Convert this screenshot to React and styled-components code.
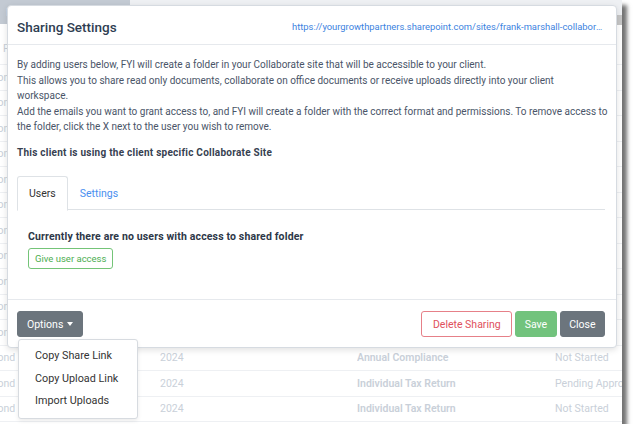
import React from 'react';
import styled, { createGlobalStyle } from 'styled-components';

/********************     GLOBAL     ********************/

const GlobalStyle = createGlobalStyle`
  html, body {
    margin: 0;
    padding: 0;
    background: #fff;
  }
  body {
    font-family: Roboto, "Liberation Sans", sans-serif;
  }
  * {
    box-sizing: border-box;
  }
`;

/********************     PAGE BEHIND THE MODAL     ********************/

const Screen = styled.div`
  position: relative;
  width: 622px;
  height: 424px;
  overflow: hidden;
  background: #fff;
  box-shadow: 5px 5px 4px rgba(0, 0, 0, 0.55);
`;

const PageHeader = styled.div`
  display: flex;
  height: 24px;
  background: #c3cad3;
`;

const Brand = styled.div`
  width: 130px;
  display: flex;
  align-items: center;
  gap: 16px;
  padding: 0 6px;
  color: rgba(255, 255, 255, 0.75);
  font-size: 11px;
`;

const Search = styled.div`
  flex: 1;
  display: flex;
  align-items: center;
  gap: 5px;
  padding-left: 6px;
  background: #eef0f3;
  color: #c4cad2;
  font-size: 11px;
`;

const HeadRow = styled.div`
  height: 41px;
  padding: 18px 0 0 3px;
  border-bottom: 1px solid #eef0f3;
  color: #c9d0d9;
  font-size: 10.5px;
`;

const Row = styled.div`
  display: grid;
  grid-template-columns: 160px 197px 198px 1fr;
  align-items: center;
  height: 25.5px;
  border-bottom: 1px solid #eef0f3;
  color: #c9d0d9;
  font-size: 10.5px;
  white-space: nowrap;
`;

const Cell = styled.span`
  overflow: hidden;
  font-weight: ${(p) => (p.$strong ? 600 : 400)};
`;

const FirstCell = styled.span`
  margin-left: -9px;
`;

const ScrollThumb = styled.div`
  position: absolute;
  right: 0;
  top: 15px;
  width: 5px;
  height: 10px;
  background: #c6c6c6;
`;

/********************     MODAL     ********************/

const Modal = styled.div`
  position: absolute;
  left: 7px;
  top: 5px;
  width: 610px;
  height: 343px;
  display: flex;
  flex-direction: column;
  background: #fff;
  border: 1px solid #d6dbe1;
  border-radius: 4px;
  box-shadow: 0 2px 6px rgba(0, 0, 0, 0.12);
`;

const ModalHeader = styled.div`
  height: 39px;
  display: flex;
  align-items: center;
  justify-content: space-between;
  padding: 3px 11px 0 9px;
  border-bottom: 1px solid #e6e9ed;
`;

const Title = styled.h4`
  margin: 0;
  font-size: 13.5px;
  font-weight: 500;
  color: #2e3d52;
`;

const SiteLink = styled.a`
  max-width: 313px;
  overflow: hidden;
  white-space: nowrap;
  text-overflow: ellipsis;
  font-size: 9.4px;
  color: #3b82e0;
  text-decoration: none;
`;

const ModalBody = styled.div`
  flex: 1;
  padding: 12px 11px 0 9px;
  color: #4a5568;
  font-size: 10px;
  line-height: 15.5px;
`;

const Intro = styled.p`
  margin: 0;
  white-space: nowrap;
`;

const Notice = styled.p`
  margin: 10px 0 0;
  font-weight: 700;
  letter-spacing: 0.25px;
  color: #374151;
`;

const TabNav = styled.div`
  display: flex;
  height: 34px;
  margin-top: 16px;
  border-bottom: 1px solid #dee2e6;
`;

const Tab = styled.div`
  display: flex;
  align-items: center;
  height: 35px;
  margin-bottom: -1px;
  padding: 0 11px;
  font-size: 10.5px;
  color: ${(p) => (p.$active ? '#333' : '#4a8ff0')};
  background: ${(p) => (p.$active ? '#fff' : 'transparent')};
  border: 1px solid ${(p) => (p.$active ? '#dee2e6' : 'transparent')};
  border-bottom-color: ${(p) => (p.$active ? '#fff' : 'transparent')};
  border-radius: 3px 3px 0 0;
`;

const TabPane = styled.div`
  padding: 20px 11px 0;
`;

const EmptyText = styled.div`
  font-size: 10.5px;
  line-height: 14px;
  font-weight: 700;
  letter-spacing: 0.15px;
  color: #2d3748;
`;

const Button = styled.button`
  display: inline-flex;
  align-items: center;
  justify-content: center;
  height: ${(p) => (p.$small ? '21px' : '26px')};
  padding: 0 ${(p) => (p.$small ? '6px' : '8.5px')};
  font-family: inherit;
  font-size: ${(p) => (p.$small ? '9.5px' : '10.5px')};
  border-radius: 3px;
  cursor: pointer;
  color: ${(p) => p.$color || '#fff'};
  background: ${(p) => p.$bg || '#fff'};
  border: 1px solid ${(p) => p.$border || p.$bg || '#fff'};
`;

const GiveButton = styled(Button)`
  margin-top: 4px;
`;

const DeleteButton = styled(Button)`
  padding: 0 10.5px;
`;

const OptionsButton = styled(Button)`
  padding: 0 9px;
`;

const ModalFooter = styled.div`
  display: flex;
  align-items: center;
  gap: 3px;
  padding: 11px 11px 10px 9px;
  border-top: 1px solid #e6e9ed;
`;

const Spacer = styled.div`
  flex: 1;
`;

const Caret = styled.span`
  margin-left: 4px;
  border-left: 3.5px solid transparent;
  border-right: 3.5px solid transparent;
  border-top: 4px solid #fff;
`;

const DropdownWrap = styled.div`
  position: relative;
`;

const Menu = styled.ul`
  position: absolute;
  top: calc(100% + 2px);
  left: 1px;
  width: 120px;
  margin: 0;
  padding: 5px 0;
  list-style: none;
  background: #fff;
  border: 1px solid #d7dbe0;
  border-radius: 3px;
  box-shadow: 0 2px 4px rgba(0, 0, 0, 0.08);
  z-index: 2;
`;

const MenuItem = styled.li`
  height: 22.5px;
  line-height: 22.5px;
  padding-left: 16px;
  font-size: 10.8px;
  color: #333;
  white-space: nowrap;
`;

/********************     DATA     ********************/

const rows = [
  ['Bond', '2024', 'Annual Compliance', 'Not Started'],
  ['Bond', '2024', 'Individual Tax Return', 'Not Started'],
  ['Bond', '2024', 'Annual Compliance', 'Not Started'],
  ['Bond', '2024', 'Individual Tax Return', 'Not Started'],
  ['Bond', '2024', 'Annual Compliance', 'Not Started'],
  ['Bond', '2024', 'Individual Tax Return', 'Not Started'],
  ['Bond', '2024', 'Annual Compliance', 'Not Started'],
  ['Bond', '2024', 'Individual Tax Return', 'Not Started'],
  ['Bond', '2024', 'Annual Compliance', 'Not Started'],
  ['Bond', '2024', 'Individual Tax Return', 'Not Started'],
  ['Bond', '2024', 'Annual Compliance', 'Not Started'],
  ['Bond', '2024', 'Annual Compliance', 'Not Started'],
  ['Bond', '2024', 'Individual Tax Return', 'Pending Approval'],
  ['Bond', '2024', 'Individual Tax Return', 'Not Started'],
];

const SearchIcon = () => (
  <svg width="11" height="11" viewBox="0 0 12 12" fill="none" stroke="#b7bec7" strokeWidth="1.5">
    <circle cx="5" cy="5" r="3.8" />
    <line x1="7.8" y1="7.8" x2="11" y2="11" />
  </svg>
);

const App = () => (
  <>
    <GlobalStyle />
    <Screen>
      <PageHeader>
        <Brand>
          <span>Knowledge</span>
          <span>Practice</span>
        </Brand>
        <Search>
          <SearchIcon />
          <span>Search groups, clients or jobs</span>
        </Search>
      </PageHeader>
      <HeadRow>First Name</HeadRow>
      {rows.map((r, i) => (
        <Row key={i}>
          <FirstCell>{r[0]}</FirstCell>
          <Cell>{r[1]}</Cell>
          <Cell $strong>{r[2]}</Cell>
          <Cell>{r[3]}</Cell>
        </Row>
      ))}
      <ScrollThumb />

      <Modal>
        <ModalHeader>
          <Title>Sharing Settings</Title>
          <SiteLink href="#">
            https://yourgrowthpartners.sharepoint.com/sites/frank-marshall-collaborate-site
          </SiteLink>
        </ModalHeader>

        <ModalBody>
          <Intro>
            By adding users below, FYI will create a folder in your Collaborate site that will be
            accessible to your client.
            <br />
            This allows you to share read only documents, collaborate on office documents or receive
            uploads directly into your client
            <br />
            workspace.
            <br />
            Add the emails you want to grant access to, and FYI will create a folder with the correct
            format and permissions. To remove access to
            <br />
            the folder, click the X next to the user you wish to remove.
          </Intro>
          <Notice>This client is using the client specific Collaborate Site</Notice>

          <TabNav>
            <Tab $active>Users</Tab>
            <Tab>Settings</Tab>
          </TabNav>
          <TabPane>
            <EmptyText>Currently there are no users with access to shared folder</EmptyText>
            <GiveButton $small $color="#4cae50" $border="#74c478">
              Give user access
            </GiveButton>
          </TabPane>
        </ModalBody>

        <ModalFooter>
          <DropdownWrap>
            <OptionsButton $bg="#6c757d">
              Options
              <Caret />
            </OptionsButton>
            <Menu>
              <MenuItem>Copy Share Link</MenuItem>
              <MenuItem>Copy Upload Link</MenuItem>
              <MenuItem>Import Uploads</MenuItem>
            </Menu>
          </DropdownWrap>
          <Spacer />
          <DeleteButton $color="#e0505c" $border="#e68088">
            Delete Sharing
          </DeleteButton>
          <Button $bg="#72c37d">Save</Button>
          <Button $bg="#6c757d">Close</Button>
        </ModalFooter>
      </Modal>
    </Screen>
  </>
);

export default App;
